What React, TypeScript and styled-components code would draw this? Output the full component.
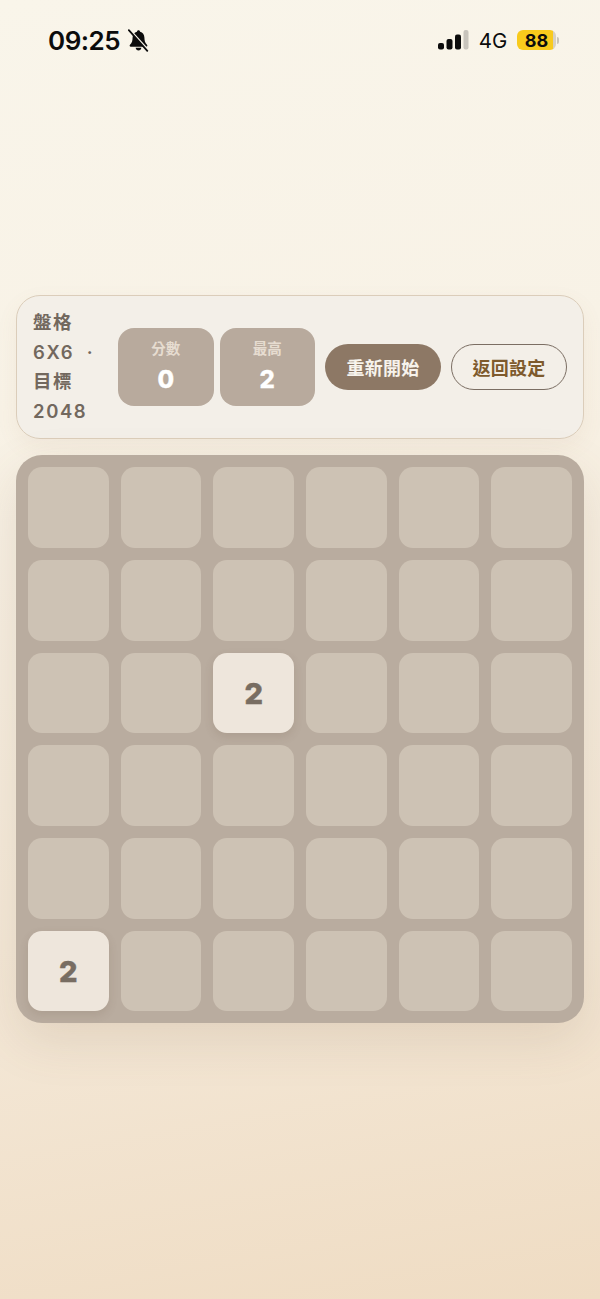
import React from "react";
import styled, { createGlobalStyle } from "styled-components";

const GlobalStyle = createGlobalStyle`
  html, body {
    margin: 0;
    padding: 0;
    height: 100%;
  }
  body {
    font-family: "Inter", "Noto Sans CJK TC", sans-serif;
  }
`;

const Page = styled.div`
  box-sizing: border-box;
  width: 600px;
  height: 1299px;
  overflow: hidden;
  padding: 0 16px;
  background: linear-gradient(170deg, #f9f5ea 0%, #f8f2e6 30%, #f3e6d4 75%, #efdcc3 100%);
`;

const StatusBar = styled.div`
  height: 80px;
  margin: 0 -16px;
  padding: 0 41px 0 48px;
  box-sizing: border-box;
  display: flex;
  align-items: center;
  justify-content: space-between;
  color: #0c0c0c;
`;

const StatusGroup = styled.div`
  display: flex;
  align-items: center;
`;

const Clock = styled.span`
  font-family: "Inter", sans-serif;
  font-size: 26px;
  font-weight: 600;
  letter-spacing: -0.5px;
  margin-right: 8px;
`;

const Network = styled.span`
  font-family: "Inter", sans-serif;
  font-size: 20.5px;
  font-weight: 400;
  margin: 0 10px;
  letter-spacing: -0.2px;
`;

const Battery = styled.div`
  width: 39px;
  height: 20px;
  border-radius: 6px;
  background: linear-gradient(90deg, #f8ca1c 0 92%, #d6d0c2 92% 100%);
  font-family: "Inter", sans-serif;
  font-size: 18px;
  font-weight: 700;
  display: flex;
  align-items: center;
  justify-content: center;
`;

const BatteryCap = styled.div`
  width: 2px;
  height: 7px;
  margin-left: 1px;
  border-radius: 0 2px 2px 0;
  background: #c9c4b8;
`;

const Panel = styled.section`
  box-sizing: border-box;
  height: 144px;
  margin-top: 215px;
  padding: 0 16px;
  display: flex;
  align-items: center;
  background: rgba(242, 238, 232, 0.95);
  border: 1.5px solid #dbcdba;
  border-radius: 24px;
  box-shadow: 0 8px 22px rgba(150, 120, 80, 0.07);
`;

const Info = styled.div`
  width: 85px;
  flex-shrink: 0;
  font-family: "Inter", "Noto Sans CJK TC", sans-serif;
  font-size: 18.5px;
  font-weight: 600;
  line-height: 29.5px;
  letter-spacing: 1.6px;
  color: #72685e;
`;

const Stats = styled.div`
  display: flex;
  gap: 6px;
  margin-right: 10px;
`;

const Stat = styled.div`
  box-sizing: border-box;
  width: 95.5px;
  height: 78px;
  padding-top: 11px;
  border-radius: 16px;
  background: #b8aa9d;
  display: flex;
  flex-direction: column;
  align-items: center;
  gap: 6px;
`;

const StatLabel = styled.div`
  font-size: 14.5px;
  line-height: 20px;
  font-weight: 600;
  color: #e6dcd0;
`;

const StatValue = styled.div`
  font-family: "Inter", sans-serif;
  font-size: 24px;
  line-height: 30px;
  font-weight: 800;
  color: #ffffff;
  -webkit-text-stroke: 0.3px #ffffff;
`;

const Button = styled.div<{ $primary?: boolean }>`
  box-sizing: border-box;
  width: 116.5px;
  height: 46px;
  border-radius: 23px;
  display: flex;
  align-items: center;
  justify-content: center;
  font-size: 18px;
  font-weight: 600;
  letter-spacing: 0.3px;
  background: ${(p) => (p.$primary ? "#8d7865" : "transparent")};
  color: ${(p) => (p.$primary ? "#f7f3ec" : "#7e5a2c")};
  border: ${(p) => (p.$primary ? "none" : "1.5px solid #7b6e63")};
  margin-right: ${(p) => (p.$primary ? "10px" : "0")};
`;

const Board = styled.main`
  box-sizing: border-box;
  width: 568px;
  height: 568px;
  margin-top: 16.4px;
  padding: 12px;
  display: grid;
  grid-template-columns: repeat(6, 1fr);
  grid-template-rows: repeat(6, 1fr);
  gap: 12px;
  background: #b9ac9f;
  border-radius: 26px;
  box-shadow: 0 18px 50px rgba(120, 95, 65, 0.14);
`;

const Cell = styled.div<{ $filled?: boolean }>`
  box-sizing: border-box;
  padding-top: 1px;
  border-radius: 14px;
  display: flex;
  align-items: center;
  justify-content: center;
  font-family: "Inter", sans-serif;
  font-size: 29px;
  font-weight: 800;
  color: #786d62;
  -webkit-text-stroke: 0.5px #786d62;
  background: ${(p) => (p.$filled ? "#eee6dc" : "#cdc2b4")};
  box-shadow: ${(p) => (p.$filled ? "0 4px 10px rgba(100, 80, 60, 0.14)" : "none")};
`;

const filled: Record<number, string> = { 14: "2", 30: "2" };

const SignalBars = () => (
  <svg width="31" height="20" viewBox="0 0 31 20">
    <rect x="0" y="13" width="6" height="6.5" rx="2" fill="#0c0c0c" />
    <rect x="8.5" y="9" width="6" height="10.5" rx="2" fill="#0c0c0c" />
    <rect x="17" y="4.5" width="6" height="15" rx="2" fill="#0c0c0c" />
    <rect x="25.5" y="0" width="5" height="19.5" rx="2" fill="#c8c4bc" />
  </svg>
);

const SilentBell = () => (
  <svg width="21" height="23" viewBox="0 0 21 23">
    <path
      d="M10.5 1.2c-.9 0-1.5.6-1.6 1.5C6.2 3.4 4.7 5.6 4.6 8.6c-.1 3.4-.6 5.2-2.6 7.2-.8.8-.3 1.9.8 1.9h15.4c1.1 0 1.6-1.1.8-1.9-2-2-2.5-3.8-2.6-7.2-.1-3-1.6-5.2-4.3-5.9-.1-.9-.7-1.5-1.6-1.5z"
      fill="#0c0c0c"
    />
    <path d="M7.6 18.8c.2 1.6 1.4 2.8 2.9 2.8s2.7-1.2 2.9-2.8z" fill="#0c0c0c" />
    <path d="M1.5 0.5 20 21" stroke="#f9f5ea" strokeWidth="2" />
    <path d="M0.8 1.2 19.3 21.8" stroke="#0c0c0c" strokeWidth="1.8" strokeLinecap="round" />
  </svg>
);

export default function App() {
  return (
    <Page>
      <GlobalStyle />
      <StatusBar>
        <StatusGroup>
          <Clock>09:25</Clock>
          <SilentBell />
        </StatusGroup>
        <StatusGroup>
          <SignalBars />
          <Network>4G</Network>
          <Battery>88</Battery>
          <BatteryCap />
        </StatusGroup>
      </StatusBar>
      <Panel>
        <Info>
          盤格
          <br />
          6X6 &nbsp;·
          <br />
          目標
          <br />
          2048
        </Info>
        <Stats>
          <Stat>
            <StatLabel>分數</StatLabel>
            <StatValue>0</StatValue>
          </Stat>
          <Stat>
            <StatLabel>最高</StatLabel>
            <StatValue>2</StatValue>
          </Stat>
        </Stats>
        <Button $primary>重新開始</Button>
        <Button>返回設定</Button>
      </Panel>
      <Board>
        {Array.from({ length: 36 }, (_, i) => (
          <Cell key={i} $filled={!!filled[i]}>
            {filled[i]}
          </Cell>
        ))}
      </Board>
    </Page>
  );
}
